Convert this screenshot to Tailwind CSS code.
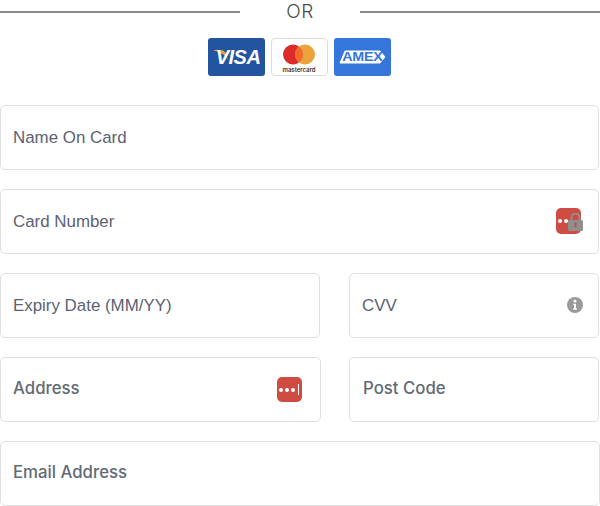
<!DOCTYPE html>
<html>
<head>
<meta charset="utf-8">
<script src="https://cdn.jsdelivr.net/npm/@tailwindcss/browser@4"></script>
</head>
<body class="bg-white">
<div class="w-[600px] h-[506px] overflow-hidden flex flex-col font-['Liberation_Sans',Arial,sans-serif] text-[16.9px] text-[#5c6272]">
  <div class="flex items-center h-[23px]">
    <div class="w-[240px] h-[2px] bg-[#8a8a8a]"></div>
    <div class="w-[120px] text-center text-[19px] leading-[23px] tracking-[0.6px] text-[#4a4a4a] font-['Inter',sans-serif] font-light">OR</div>
    <div class="w-[240px] h-[2px] bg-[#8a8a8a]"></div>
  </div>
  <div class="flex justify-center gap-[6px] mt-[15px] pr-[2px]">
    <div class="w-[57px] h-[38px] rounded-[3px] bg-[#22549f] relative flex items-center justify-center overflow-hidden">
      <svg class="absolute left-[5px] top-[11px]" width="16" height="12" viewBox="0 0 16 12"><path d="M0 1.5 C5 0 10 1 12 3 L15 11 C12 5 6 2.5 0 1.5Z" fill="#e9a33c"/></svg>
      <span class="relative ml-[4px] font-bold italic text-[20px] text-white tracking-[-0.5px] leading-none">VISA</span>
    </div>
    <div class="w-[57px] h-[38px] rounded-[4px] bg-white border border-[#dcdcdc] flex flex-col items-center pt-[5px] box-border">
      <svg width="34" height="21" viewBox="0 0 34 21"><circle cx="11" cy="10.5" r="10" fill="#dd2a2a"/><circle cx="23" cy="10.5" r="10" fill="#eda33d"/><path d="M17 2.5a10 10 0 0 1 0 16a10 10 0 0 1 0-16Z" fill="#ef6a2b"/></svg>
      <span class="text-[6px] leading-[7px] mt-[1px] font-semibold text-[#333] font-['Inter',sans-serif]">mastercard</span>
    </div>
    <div class="w-[57px] h-[38px] rounded-[3px] bg-[#3476d9] flex items-center justify-center">
      <div class="relative flex items-center justify-center w-[47px] h-[14px]">
        <svg class="absolute left-0 top-0" width="47" height="14" viewBox="0 0 47 14"><path d="M6 1H41L46 7L41 13H1Z" fill="#fff" stroke="#fff" stroke-width="1"/></svg>
        <span class="relative font-bold text-[13px] leading-[12px] scale-x-[1.1] tracking-[-0.2px] text-[#3476d9]">AMEX</span>
      </div>
    </div>
  </div>

  <div class="mt-[29px] w-[599px] h-[65px] flex items-center px-[12px] border border-[#dfdfdf] rounded-[5px]">Name On Card</div>
  <div class="mt-[19px] w-[599px] h-[65px] flex items-center justify-between pl-[12px] pr-[17px] border border-[#dfdfdf] rounded-[5px]">
    <span>Card Number</span>
    <span class="relative w-[25px] h-[26px] mb-[1px] rounded-[5px] bg-[#cf4c42] flex items-center pl-[2px] gap-[2px]">
      <i class="w-[4px] h-[4px] rounded-full bg-white"></i><i class="w-[4px] h-[4px] rounded-full bg-white"></i>
      <svg class="absolute left-[12px] top-[5px]" width="15" height="18" viewBox="0 0 15 18"><path d="M3.5 7V4.5a4 4 0 0 1 8 0V7" fill="none" stroke="#8f8f8f" stroke-width="2"/><rect x="0" y="7" width="15" height="11" rx="1.5" fill="#8f8f8f"/><rect x="6.5" y="9.5" width="2" height="5" rx="1" fill="#cf4c42"/></svg>
    </span>
  </div>
  <div class="mt-[19px] flex gap-[29px]">
    <div class="w-[320px] h-[65px] flex items-center px-[12px] border border-[#dfdfdf] rounded-[5px]">Expiry Date (MM/YY)</div>
    <div class="w-[250px] h-[65px] flex items-center justify-between pl-[12px] pr-[15px] pb-[1px] border border-[#dfdfdf] rounded-[5px]">
      <span class="mt-[1px]">CVV</span>
      <svg width="16" height="16" viewBox="0 0 16 16"><circle cx="8" cy="8" r="8" fill="#9a9a9a"/><circle cx="8" cy="4.2" r="1.4" fill="#fff"/><path d="M6.3 6.7H9V11.5H10V12.7H6V11.5H7V7.9H6.3Z" fill="#fff"/></svg>
    </div>
  </div>
  <div class="mt-[19px] flex gap-[28px] font-['Inter',sans-serif] text-[16.8px] font-[450] text-[#646976]">
    <div class="w-[321px] h-[65px] flex items-center justify-between pl-[12px] pr-[18px] pb-[1px] border border-[#dfdfdf] rounded-[5px]">
      <span>Address</span>
      <span class="w-[25px] h-[25px] mt-[1px] rounded-[5px] bg-[#cf4c42] flex items-center pl-[2px] gap-[2px]">
        <i class="w-[4px] h-[4px] rounded-full bg-white"></i><i class="w-[4px] h-[4px] rounded-full bg-white"></i><i class="w-[4px] h-[4px] rounded-full bg-white"></i><i class="w-[1px] h-[11px] ml-[1px] bg-white"></i>
      </span>
    </div>
    <div class="w-[250px] h-[65px] flex items-center px-[13px] pb-[1px] border border-[#dfdfdf] rounded-[5px]">Post Code</div>
  </div>
  <div class="mt-[19px] w-[600px] h-[65px] flex items-center px-[12px] pb-[1px] border border-[#dfdfdf] rounded-[5px] font-['Inter',sans-serif] text-[16.8px] font-[450] text-[#646976]">Email Address</div>
</div>
</body>
</html>
